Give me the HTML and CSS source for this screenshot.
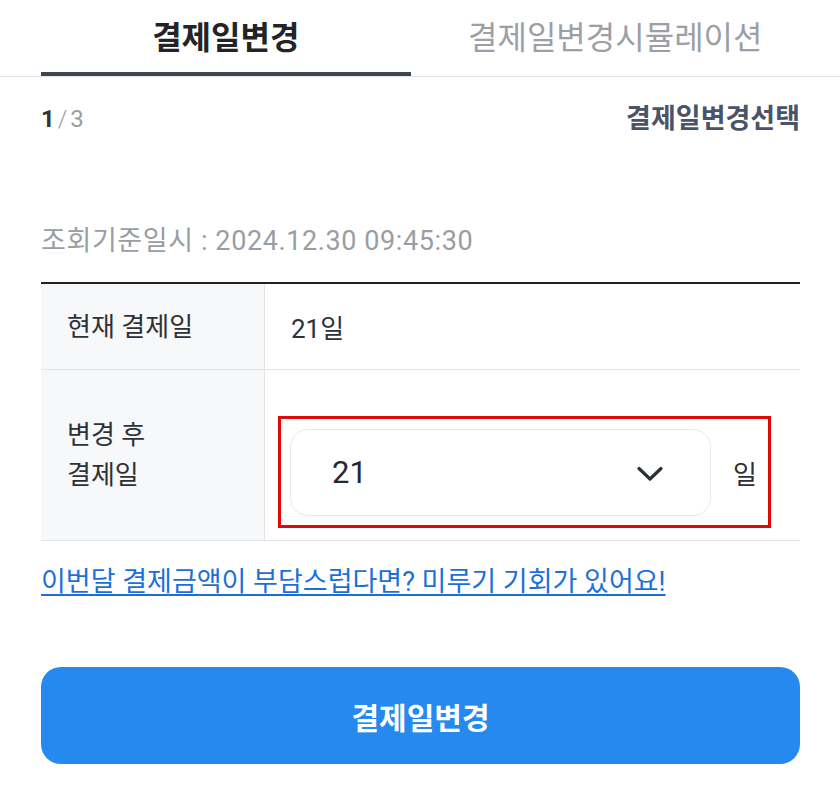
FILE: index.html
```html
<!DOCTYPE html>
<html lang="ko">
<head>
<meta charset="utf-8">
<title>결제일변경</title>
<link rel="stylesheet" href="styles.css">
</head>
<body>
<div class="tabs-wrap">
  <div class="tabs">
    <div class="tab active">결제일변경</div>
    <div class="tab">결제일변경시뮬레이션</div>
  </div>
</div>
<main class="page">
  <div class="step-row">
    <div class="step"><span class="cur">1</span><span class="slash">/</span><span class="total">3</span></div>
    <div class="step-title">결제일변경선택</div>
  </div>
  <div class="stamp">조회기준일시 : 2024.12.30 09:45:30</div>
  <div class="table">
    <div class="row row1">
      <div class="th">현재 결제일</div>
      <div class="td">21일</div>
    </div>
    <div class="row row2">
      <div class="th">변경 후<br>결제일</div>
      <div class="td td-select">
        <div class="highlight">
          <div class="select">
            <span class="select-value">21</span>
            <svg class="chev" width="26" height="16" viewBox="0 0 26 16"><path d="M2 2.5 L13 13 L24 2.5" fill="none" stroke="#2b2f36" stroke-width="3.2" stroke-linecap="round" stroke-linejoin="round"/></svg>
          </div>
          <span class="unit">일</span>
        </div>
      </div>
    </div>
  </div>
  <a class="link" href="#">이번달 결제금액이 부담스럽다면? 미루기 기회가 있어요!</a>
  <button class="btn">결제일변경</button>
</main>
</body>
</html>
```
FILE: styles.css
```css
* { box-sizing: border-box; }
html, body { margin: 0; padding: 0; background: #fff; }
body {
  font-family: Roboto, "Noto Sans CJK KR", "Noto Sans", sans-serif;
  color: #2a2d33;
}
.tabs-wrap { border-bottom: 1px solid #e2e4e8; }
.tabs {
  display: flex;
  gap: 20px;
  padding: 0 40px 0 41px;
}
.tab {
  flex: 1;
  height: 76px;
  padding-top: 4px;
  line-height: 68px;
  text-align: center;
  font-size: 32px;
  color: #9c9fa5;
  border-bottom: 4px solid transparent;
}
.tab.active {
  color: #222428;
  font-weight: 700;
  border-bottom-color: #3f4651;
}
.page { padding: 0 40px 0 41px; }
.step-row {
  display: flex;
  justify-content: space-between;
  align-items: center;
  padding-top: 24px;
  height: 60px;
}
.step { font-size: 24px; line-height: 36px; color: #9a9da2; }
.step .cur { color: #333; font-weight: 700; }
.step .slash { margin: 0 3px; font-weight: 300; }
.step-title {
  font-size: 27px;
  font-weight: 700;
  color: #4a5466;
  line-height: 36px;
}
.stamp {
  margin-top: 87px;
  font-size: 27px;
  line-height: 34px;
  color: #9a9da2;
  letter-spacing: 0.6px;
}
.table {
  margin-top: 24px;
  border-top: 2px solid #222;
}
.row {
  display: flex;
  border-bottom: 1px solid #e2e4e8;
}
.row1 { height: 86px; }
.row2 { height: 171px; }
.th {
  width: 224px;
  flex: none;
  background: #f7f8fa;
  border-right: 1px solid #e2e4e8;
  padding-left: 26px;
  display: flex;
  align-items: center;
  font-size: 26px;
  line-height: 40px;
  color: #2e3136;
}
.td {
  flex: 1;
  display: flex;
  align-items: center;
  padding-left: 26px;
  font-size: 26px;
  color: #2e3136;
}
.td-select {
  align-items: flex-start;
  padding: 46px 29px 0 13px;
}
.highlight {
  flex: 1;
  display: flex;
  align-items: center;
  border: 3px solid #e00a0a;
  padding: 10px 11px 9px 9px;
}
.select {
  width: 421px;
  height: 87px;
  border: 1px solid #e6e8eb;
  border-radius: 18px;
  display: flex;
  align-items: center;
  justify-content: space-between;
  padding: 0 47px 0 41px;
}
.select-value { font-size: 31px; color: #25282d; }
.chev { display: block; margin-top: 2px; }
.unit { margin-left: 22px; font-size: 26px; color: #2e3136; }
.link {
  display: inline-block;
  margin-top: 23px;
  font-size: 27px;
  line-height: 36px;
  color: #1c6fd9;
  text-decoration: underline;
  text-underline-offset: 3px;
}
.btn {
  display: block;
  width: 100%;
  margin-top: 67px;
  height: 97px;
  border: none;
  border-radius: 20px;
  background: #2589f0;
  color: #fff;
  font-family: Roboto, "Noto Sans CJK KR", "Noto Sans", sans-serif;
  font-size: 30px;
  font-weight: 700;
}
```
